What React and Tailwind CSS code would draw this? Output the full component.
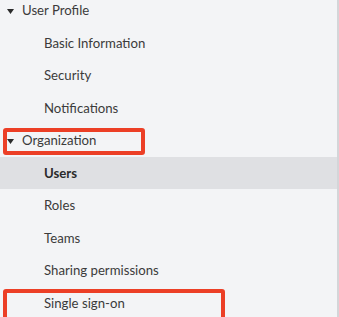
const sections = [
  {
    title: "User Profile",
    items: ["Basic Information", "Security", "Notifications"],
  },
  {
    title: "Organization",
    boxed: true,
    items: ["Users", "Roles", "Teams", "Sharing permissions", "Single sign-on"],
  },
];

const Caret = () => (
  <svg width="7" height="5" viewBox="0 0 7 5" className="shrink-0">
    <path d="M0 0 H7 L3.5 5 Z" fill="#2b2b2b" />
  </svg>
);

const App = () => {
  return (
    <div className="w-[339px] h-[317px] overflow-hidden bg-[#f3f4f6] border-r-2 border-[#d4d5d8] font-['Lato','Liberation_Sans',sans-serif] text-[13.2px] text-[#3b3b3b]">
      <div className="-mt-[6px]">
        {sections.map((section) => (
          <div key={section.title}>
            <div className="relative h-[32.5px] pt-[2px] flex items-center gap-[8px] pl-[7px]">
              <Caret />
              <span>{section.title}</span>
              {section.boxed && (
                <div className="absolute left-[3px] top-[4px] w-[142px] h-[27px] border-[4px] border-[#ec3f26] rounded-[3px]" />
              )}
            </div>
            {section.items.map((item) => (
              <div
                key={item}
                className={
                  "relative h-[32.5px] pt-[2px] flex items-center pl-[44px] " +
                  (item === "Users" ? "bg-[#dfe0e3] font-bold text-[#2b2b2b]" : "")
                }
              >
                <span>{item}</span>
                {item === "Single sign-on" && (
                  <div className="absolute left-[3px] top-[2px] w-[222px] h-[40px] border-[4px] border-[#ec3f26] rounded-[3px]" />
                )}
              </div>
            ))}
          </div>
        ))}
      </div>
    </div>
  );
};

export default App;
